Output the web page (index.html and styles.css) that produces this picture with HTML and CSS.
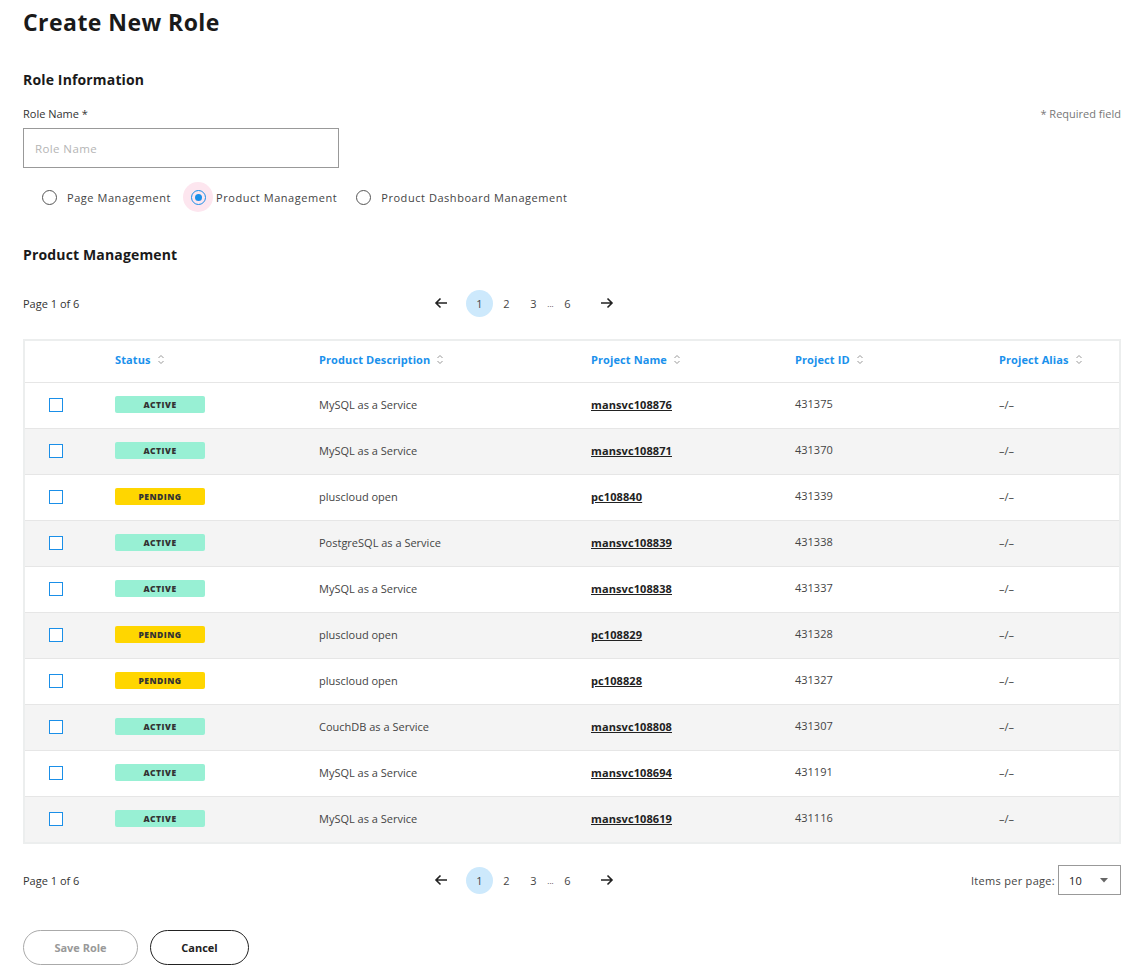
FILE: index.html
```html
<!DOCTYPE html>
<html>
<head>
<meta charset="utf-8">
<link rel="stylesheet" href="styles.css">
</head>
<body>
<div class="page">
  <h1 class="title">Create New Role</h1>
  <h2 class="section">Role Information</h2>
  <div class="label-row">
    <span class="label">Role Name *</span>
    <span class="required">* Required field</span>
  </div>
  <div class="input">Role Name</div>
  <div class="radios">
    <label class="radio"><span class="circle"></span><span>Page Management</span></label>
    <label class="radio checked"><span class="halo"><span class="circle"><span class="dot"></span></span></span><span>Product Management</span></label>
    <label class="radio"><span class="circle"></span><span>Product Dashboard Management</span></label>
  </div>
  <h2 class="section pm">Product Management</h2>

  <div class="pager top">
    <span class="pageinfo">Page 1 of 6</span>
    <div class="pages">
      <svg class="arrow prev" width="14" height="12" viewBox="0 0 14 12"><path d="M13 6H2M6.5 1.5L2 6l4.5 4.5" fill="none" stroke="#222" stroke-width="1.6"/></svg>
      <span class="pg cur">1</span><span class="pg">2</span><span class="pg">3</span><span class="dots">...</span><span class="pg">6</span>
      <svg class="arrow next" width="14" height="12" viewBox="0 0 14 12"><path d="M1 6h11M7.5 1.5L12 6l-4.5 4.5" fill="none" stroke="#222" stroke-width="1.6"/></svg>
    </div>
    <span class="spacer"></span>
  </div>

  <div class="table">
    <div class="row head">
      <div class="cell"></div>
      <div class="cell">Status<svg class="sort" width="8" height="11" viewBox="0 0 8 11"><path d="M1.5 4L4 1.5 6.5 4M1.5 7L4 9.5 6.5 7" fill="none" stroke="#999" stroke-width="1"/></svg></div>
      <div class="cell">Product Description<svg class="sort" width="8" height="11" viewBox="0 0 8 11"><path d="M1.5 4L4 1.5 6.5 4M1.5 7L4 9.5 6.5 7" fill="none" stroke="#999" stroke-width="1"/></svg></div>
      <div class="cell">Project Name<svg class="sort" width="8" height="11" viewBox="0 0 8 11"><path d="M1.5 4L4 1.5 6.5 4M1.5 7L4 9.5 6.5 7" fill="none" stroke="#999" stroke-width="1"/></svg></div>
      <div class="cell">Project ID<svg class="sort" width="8" height="11" viewBox="0 0 8 11"><path d="M1.5 4L4 1.5 6.5 4M1.5 7L4 9.5 6.5 7" fill="none" stroke="#999" stroke-width="1"/></svg></div>
      <div class="cell">Project Alias<svg class="sort" width="8" height="11" viewBox="0 0 8 11"><path d="M1.5 4L4 1.5 6.5 4M1.5 7L4 9.5 6.5 7" fill="none" stroke="#999" stroke-width="1"/></svg></div>
    </div>
    <div class="row"><div class="cell"><span class="cb"></span></div><div class="cell"><span class="badge active">ACTIVE</span></div><div class="cell">MySQL as a Service</div><div class="cell"><a class="pname">mansvc108876</a></div><div class="cell id">431375</div><div class="cell">–/–</div></div>
    <div class="row"><div class="cell"><span class="cb"></span></div><div class="cell"><span class="badge active">ACTIVE</span></div><div class="cell">MySQL as a Service</div><div class="cell"><a class="pname">mansvc108871</a></div><div class="cell id">431370</div><div class="cell">–/–</div></div>
    <div class="row"><div class="cell"><span class="cb"></span></div><div class="cell"><span class="badge pending">PENDING</span></div><div class="cell">pluscloud open</div><div class="cell"><a class="pname">pc108840</a></div><div class="cell id">431339</div><div class="cell">–/–</div></div>
    <div class="row"><div class="cell"><span class="cb"></span></div><div class="cell"><span class="badge active">ACTIVE</span></div><div class="cell">PostgreSQL as a Service</div><div class="cell"><a class="pname">mansvc108839</a></div><div class="cell id">431338</div><div class="cell">–/–</div></div>
    <div class="row"><div class="cell"><span class="cb"></span></div><div class="cell"><span class="badge active">ACTIVE</span></div><div class="cell">MySQL as a Service</div><div class="cell"><a class="pname">mansvc108838</a></div><div class="cell id">431337</div><div class="cell">–/–</div></div>
    <div class="row"><div class="cell"><span class="cb"></span></div><div class="cell"><span class="badge pending">PENDING</span></div><div class="cell">pluscloud open</div><div class="cell"><a class="pname">pc108829</a></div><div class="cell id">431328</div><div class="cell">–/–</div></div>
    <div class="row"><div class="cell"><span class="cb"></span></div><div class="cell"><span class="badge pending">PENDING</span></div><div class="cell">pluscloud open</div><div class="cell"><a class="pname">pc108828</a></div><div class="cell id">431327</div><div class="cell">–/–</div></div>
    <div class="row"><div class="cell"><span class="cb"></span></div><div class="cell"><span class="badge active">ACTIVE</span></div><div class="cell">CouchDB as a Service</div><div class="cell"><a class="pname">mansvc108808</a></div><div class="cell id">431307</div><div class="cell">–/–</div></div>
    <div class="row"><div class="cell"><span class="cb"></span></div><div class="cell"><span class="badge active">ACTIVE</span></div><div class="cell">MySQL as a Service</div><div class="cell"><a class="pname">mansvc108694</a></div><div class="cell id">431191</div><div class="cell">–/–</div></div>
    <div class="row"><div class="cell"><span class="cb"></span></div><div class="cell"><span class="badge active">ACTIVE</span></div><div class="cell">MySQL as a Service</div><div class="cell"><a class="pname">mansvc108619</a></div><div class="cell id">431116</div><div class="cell">–/–</div></div>
  </div>

  <div class="pager bottom">
    <span class="pageinfo">Page 1 of 6</span>
    <div class="pages">
      <svg class="arrow prev" width="14" height="12" viewBox="0 0 14 12"><path d="M13 6H2M6.5 1.5L2 6l4.5 4.5" fill="none" stroke="#222" stroke-width="1.6"/></svg>
      <span class="pg cur">1</span><span class="pg">2</span><span class="pg">3</span><span class="dots">...</span><span class="pg">6</span>
      <svg class="arrow next" width="14" height="12" viewBox="0 0 14 12"><path d="M1 6h11M7.5 1.5L12 6l-4.5 4.5" fill="none" stroke="#222" stroke-width="1.6"/></svg>
    </div>
    <div class="spacer ipp">
      <span>Items per page:</span>
      <div class="select"><span>10</span><svg width="8" height="5" viewBox="0 0 8 5"><path d="M0 0h8L4 4.5z" fill="#666"/></svg></div>
    </div>
  </div>

  <div class="actions">
    <button class="btn save">Save Role</button>
    <button class="btn cancel">Cancel</button>
  </div>
</div>
</body>
</html>
```
FILE: styles.css
```css
* { box-sizing: border-box; }
body {
  margin: 0;
  font-family: "Open Sans", "DejaVu Sans", sans-serif;
  color: #333;
  background: #fff;
}
.page {
  padding: 8px 5px 0 23px;
  width: 1126px;
}
.title {
  margin: 0;
  font-size: 23px;
  line-height: 28px;
  font-weight: 700;
  color: #1a1a1a;
  letter-spacing: 0.45px;
}
.section {
  margin: 0;
  font-size: 14px;
  line-height: 20px;
  font-weight: 700;
  color: #1a1a1a;
  margin-top: 34px;
  letter-spacing: 0.15px;
}
.section.pm { margin-top: 33px; }
.label-row {
  display: flex;
  justify-content: space-between;
  margin-top: 17px;
  font-size: 11px;
  line-height: 14px;
}
.label { color: #333; }
.required { color: #777; }
.input {
  margin-top: 7px;
  width: 316px;
  height: 40px;
  border: 1px solid #999;
  padding: 0 11px;
  display: flex;
  align-items: center;
  font-size: 11.5px;
  color: #b5b5b5;
  letter-spacing: 0.4px;
}
.radios {
  display: flex;
  align-items: center;
  margin-top: 14px;
  padding-left: 19px;
  height: 30px;
  font-size: 11px;
  color: #444;
  letter-spacing: 0.55px;
}
.radio {
  display: flex;
  align-items: center;
  gap: 10px;
  margin-right: 19px;
}
.radio.checked { margin-left: -7px; gap: 3px; margin-right: 19px; }
.circle {
  width: 15px;
  height: 15px;
  border: 1px solid #555;
  border-radius: 50%;
  display: flex;
  align-items: center;
  justify-content: center;
}
.halo {
  width: 30px;
  height: 30px;
  border-radius: 50%;
  background: #fde6ef;
  display: flex;
  align-items: center;
  justify-content: center;
}
.checked .circle { border-color: #1a8fe8; }
.dot { width: 7px; height: 7px; border-radius: 50%; background: #1a8fe8; }

.pager {
  display: flex;
  align-items: center;
  height: 28px;
  font-size: 11px;
  color: #333;
}
.pager.top { margin-top: 24px; }
.pager.bottom { margin-top: 22px; }
.pageinfo { width: 411px; }
.pages {
  display: flex;
  align-items: center;
}
.arrow.prev { margin-right: 18px; }
.arrow.next { margin-left: 19px; }
.pg {
  width: 27px;
  height: 27px;
  display: flex;
  align-items: center;
  justify-content: center;
  color: #444;
}
.pg.cur {
  background: #cde9fc;
  border-radius: 50%;
}
.dots { width: 7px; font-size: 8px; color: #444; text-align: center; }
.spacer { flex: 1; }
.ipp {
  display: flex;
  justify-content: flex-end;
  align-items: center;
  gap: 3px;
  color: #444;
  letter-spacing: 0.3px;
}
.select {
  width: 63px;
  height: 30px;
  border: 1px solid #999;
  display: flex;
  align-items: center;
  justify-content: space-between;
  padding: 0 12px 0 10px;
  font-size: 11px;
  color: #222;
}

.table {
  margin-top: 22px;
  border: 2px solid #eceeee;
  width: 1098px;
}
.row {
  display: grid;
  grid-template-columns: 90px 204px 272px 204px 204px 1fr;
  height: 46px;
  align-items: center;
  border-top: 1px solid #e6e6e6;
  font-size: 11px;
  color: #444;
}
.row.head {
  border-top: none;
  height: 41px;
  padding-bottom: 4px;
  color: #1a91ec;
  font-weight: 700;
  letter-spacing: 0.1px;
}
.row:nth-child(odd):not(.head) { background: #f4f4f4; }
.row:not(.head) .cell { margin-top: -2px; }
.cell { display: flex; align-items: center; }
.sort { margin-left: 6px; }
.cb {
  margin-left: 24px;
  width: 14px;
  height: 14px;
  border: 1.5px solid #1a8fe8;
  background: #fff;
}
.badge {
  width: 90px;
  height: 17px;
  border-radius: 2px;
  display: flex;
  align-items: center;
  justify-content: center;
  font-size: 8.5px;
  font-weight: 800;
  color: #333;
  letter-spacing: 0.5px;
}
.badge.active { background: #98f0d4; }
.badge.pending { background: #ffd600; }
.pname {
  color: #222;
  font-weight: 700;
  text-decoration: underline;
  letter-spacing: 0.1px;
}
.row:not(.head) .cell.id { margin-top: -4px; }

.actions {
  display: flex;
  gap: 12px;
  margin-top: 36px;
}
.btn {
  height: 35px;
  border-radius: 18px;
  background: #fff;
  font-family: "Open Sans", sans-serif;
  font-size: 11px;
  font-weight: 700;
}
.btn.save { width: 115px; border: 1px solid #aaa; color: #999; }
.btn.cancel { width: 99px; border: 1px solid #222; color: #222; }
```
